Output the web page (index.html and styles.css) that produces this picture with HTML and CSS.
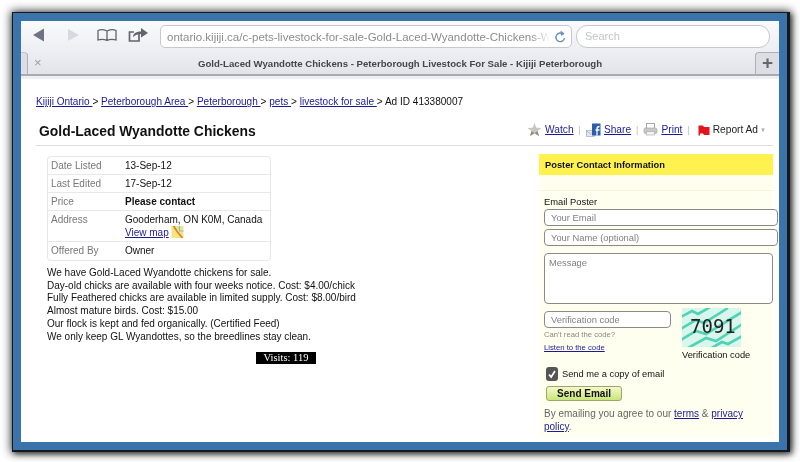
FILE: index.html
```html
<!DOCTYPE html>
<html lang="en">
<head>
    <meta charset="UTF-8">
    <title>Gold-Laced Wyandotte Chickens - Kijiji Peterborough</title>
    <link rel="stylesheet" href="styles.css">
</head>
<body>
    <div class="frame">
        <div class="screen">
            <!-- Browser toolbar -->
            <div class="toolbar">
                <svg class="tool-icons" width="120" height="24" viewBox="0 0 120 24">
                    <path d="M1 12 L12 5.500 V18.500 Z" fill="#6f7480"/>
                    <path d="M36 6 L47 12 L36 18 Z" fill="#d6d9e0"/>
                    <path d="M66 7.500 C69 6 72 6.500 75 8 C78 6.500 81 6 84 7.500 V17 C81 16 78 16 75 17.500 C72 16 69 16 66 17 Z M75 8 V17.500" fill="none" stroke="#5f646e" stroke-width="1.300"/>
                    <path d="M107 11 V18 H97.500 V9 H102" fill="none" stroke="#5f646e" stroke-width="1.700"/>
                    <path d="M101 14 C101 10 105 8.500 109 8.500 V5 L116 10 L109 14.500 V11 C106 11 103 12 101 14 Z" fill="#5f646e"/>
                </svg>
                <div class="url-box">
                    <span class="url-text">ontario.kijiji.ca/c-pets-livestock-for-sale-Gold-Laced-Wyandotte-Chickens-W</span>
                    <svg width="12" height="14" viewBox="0 0 12 14"><path d="M9.500 4.500 A4.300 4.300 0 1 0 10.500 8" fill="none" stroke="#6d8fc0" stroke-width="1.400"/><path d="M6.500 0.500 L10.500 3.500 L7 6 Z" fill="#6d8fc0"/></svg>
                </div>
                <div class="search-box">Search</div>
            </div>

            <!-- Tab strip -->
            <div class="tabbar">
                <span class="tab-close">&times;</span>
                <span class="tab-title">Gold-Laced Wyandotte Chickens - Peterborough Livestock For Sale - Kijiji Peterborough</span>
                <span class="tab-new">+</span>
            </div>

            <!-- Page -->
            <div class="page">
                <div class="crumbs">
                    <a href="#">Kijiji Ontario </a> &gt; <a href="#">Peterborough Area </a> &gt; <a href="#">Peterborough </a> &gt; <a href="#">pets </a> &gt; <a href="#">livestock for sale </a> &gt; Ad ID 413380007
                </div>
                <div class="title-row">
                    <h1>Gold-Laced Wyandotte Chickens</h1>
                    <div class="actions">
                        <svg width="15" height="15" viewBox="0 0 16 15"><path d="M8 0.500 L10 5.500 L15.500 5.800 L11.200 9.200 L12.800 14.500 L8 11.500 L3.200 14.500 L4.800 9.200 L0.500 5.800 L6 5.500 Z" fill="#c8c8c0"/><path d="M3.200 14.500 L4.800 9.200 L8 11.500 Z M12.800 14.500 L8 11.500 L11.200 9.200 Z" fill="#8e8e80"/></svg>
                        <a href="#">Watch</a><i>|</i>
                        <svg width="15" height="14" viewBox="0 0 15 14"><rect x="0.300" y="7.500" width="8" height="6" fill="#e4e7ee" stroke="#98a0ae" stroke-width="0.600"/><path d="M0.500 8 L4.300 11 L8 8" fill="none" stroke="#98a0ae" stroke-width="0.600"/><rect x="6" y="0.500" width="8.500" height="12" fill="#2f5ea8"/><path d="M11 12.500 V6 Q11 3.500 13.500 3.500 M9.500 7 H13.500" fill="none" stroke="#fff" stroke-width="1.300"/></svg>
                        <a href="#">Share</a><i>|</i>
                        <svg width="15" height="13" viewBox="0 0 14 13"><rect x="3" y="0.500" width="8" height="5" fill="#fff" stroke="#a8a8a8"/><rect x="0.500" y="5" width="13" height="5.500" rx="1.500" fill="#c8c8c8" stroke="#a0a0a0" stroke-width="0.600"/><rect x="3" y="8.500" width="8" height="3.500" fill="#f2f2f2" stroke="#a8a8a8" stroke-width="0.600"/></svg>
                        <a href="#">Print</a><i class="wider">|</i>
                        <svg width="12" height="12" viewBox="0 0 12 12"><path d="M0.500 1.500 H5 L6 3 H11.500 V11 H6 L5 9.500 H2 V11.500 H0.500 Z" fill="#e2141c"/></svg>
                        <span class="report">Report Ad</span><span class="caret">&#9660;</span>
                    </div>
                </div>

                <div class="columns">
                    <div class="left">
                        <table class="details">
                            <tr><th>Date Listed</th><td>13-Sep-12</td></tr>
                            <tr><th>Last Edited</th><td>17-Sep-12</td></tr>
                            <tr><th>Price</th><td><b>Please contact</b></td></tr>
                            <tr><th>Address</th><td>Gooderham, ON K0M, Canada<br><a href="#">View map</a><svg class="map-icon" width="13" height="12" viewBox="0 0 12 12"><rect width="12" height="12" fill="#f3e487"/><path d="M2 0 L6 6 L11 12" fill="none" stroke="#d88a20" stroke-width="1.800"/><path d="M8 0 V5 H12" fill="none" stroke="#8fb8d8" stroke-width="1.200"/></svg></td></tr>
                            <tr class="last"><th>Offered By</th><td>Owner</td></tr>
                        </table>
                        <p class="desc">We have Gold-Laced Wyandotte chickens for sale.<br>
                        Day-old chicks are available with four weeks notice. Cost: $4.00/chick<br>
                        Fully Feathered chicks are available in limited supply. Cost: $8.00/bird<br>
                        Almost mature birds. Cost: $15.00<br>
                        Our flock is kept and fed organically. (Certified Feed)<br>
                        We only keep GL Wyandottes, so the breedlines stay clean.</p>
                        <div class="visits">Visits: 119</div>
                    </div>

                    <div class="contact">
                        <div class="contact-head">Poster Contact Information</div>
                        <div class="contact-gap"></div>
                        <div class="contact-body">
                            <div class="email-label">Email Poster</div>
                            <div class="field wide">Your Email</div>
                            <div class="field wide">Your Name (optional)</div>
                            <div class="field message">Message</div>
                            <div class="verify">
                                <div class="verify-left">
                                    <div class="field code">Verification code</div>
                                    <div class="cant">Can't read the code?</div>
                                    <a class="listen" href="#">Listen to the code</a>
                                </div>
                                <div class="verify-right">
                                    <div class="captcha">
                                        <svg width="59" height="39" viewBox="0 0 59 39">
                                            <rect width="59" height="39" fill="#d8f6eb"/>
                                            <path d="M-3 10 L10 3 L16 6 L30 -2 M-3 22 L14 12 L22 15 L46 0 M-3 33 L14 23 L24 26 L60 4 M4 41 L24 30 L34 33 L62 15 M26 42 L40 34 L46 36 L62 27" fill="none" stroke="#4fd3b4" stroke-width="2.600"/>
                                        </svg>
                                        <span>7091</span>
                                    </div>
                                    <div class="captcha-label">Verification code</div>
                                </div>
                            </div>
                            <label class="copy">
                                <span class="check"><svg width="14" height="14" viewBox="0 0 14 14"><path d="M3.500 7.500 L6 10.500 L10.500 3.500" fill="none" stroke="#fff" stroke-width="2"/></svg></span>
                                Send me a copy of email
                            </label>
                            <button class="send">Send Email</button>
                            <p class="agree">By emailing you agree to our <a href="#">terms</a> &amp; <a href="#">privacy policy</a>.</p>
                        </div>
                    </div>
                </div>
            </div>
        </div>
    </div>
</body>
</html>
```

FILE: styles.css
```css
/* Photo frame round the tablet screenshot */
html, body {
    margin: 0;
    padding: 0;
    height: 462px;
    overflow: hidden;
    background: #fff;
}

body {
    font-family: "Liberation Sans", Arial, sans-serif;
    font-size: 10px;
    color: #111;
}

.frame {
    box-sizing: border-box;
    width: 778px;
    height: 440px;
    margin: 12px 0 0 12px;
    padding: 8px;
    background: #3b73ab;
    border: 1px solid #15181c;
    border-right-width: 3px;
    border-bottom-width: 2px;
    box-shadow: 0 0 9px 1px rgba(0, 0, 0, 0.75), 2px 2px 5px rgba(0, 0, 0, 0.5);
}

.screen {
    height: 100%;
    background: #fff;
    display: flex;
    flex-direction: column;
    border-radius: 2px 2px 0 0;
    filter: blur(0.25px);
}

/* Toolbar */
.toolbar {
    height: 31px;
    box-sizing: border-box;
    display: flex;
    align-items: center;
    padding: 0 9px 0 11px;
    background: linear-gradient(#fafafc, #eceef3);
}

.tool-icons {
    flex: none;
    margin: -3px 8px 0 0;
}

.url-box {
    box-sizing: border-box;
    width: 412px;
    height: 23px;
    display: flex;
    align-items: center;
    gap: 4px;
    padding: 0 5px 0 6px;
    background: #fff;
    border: 1px solid #c6c8cd;
    border-radius: 5px;
}

.url-text {
    flex: 1;
    overflow: hidden;
    white-space: nowrap;
    font-size: 11.500px;
    color: #8c8c8c;
    -webkit-mask-image: linear-gradient(to right, #000 95%, transparent);
}

.search-box {
    box-sizing: border-box;
    width: 194px;
    height: 23px;
    margin-left: 4px;
    padding: 4px 8px;
    font-size: 11px;
    color: #c4c4c4;
    background: #fff;
    border: 1px solid #c6c8cd;
    border-radius: 11px;
}

/* Tabs */
.tabbar {
    position: relative;
    height: 22px;
    margin-bottom: 4px;
    text-align: center;
    line-height: 23px;
    font-size: 9.650px;
    font-weight: bold;
    color: #44464c;
    background: linear-gradient(#eceef3, #e2e4ea);
    border-bottom: 2px solid #a9abb2;
    box-shadow: 0 3px 0 #eeeff2;
}

.tabbar::before {
    content: "";
    position: absolute;
    left: 0;
    top: 0;
    bottom: 0;
    width: 6px;
    background: #dcdee4;
    border-right: 1px solid #aeb0b6;
    border-top: 1px solid #c4c6cc;
    border-radius: 0 4px 0 0;
}

.tab-close {
    position: absolute;
    left: 13px;
    top: 0;
    font-size: 13px;
    line-height: 21px;
    font-weight: normal;
    color: #9a9ca2;
}

.tab-new {
    position: absolute;
    right: 0;
    top: 0;
    width: 24px;
    height: 22px;
    line-height: 20px;
    font-size: 19px;
    color: #62656c;
    background: #dcdee4;
    border: 1px solid #aeb0b6;
    border-right: 0;
    border-bottom: 0;
    border-radius: 4px 0 0 0;
    box-sizing: border-box;
}

/* Page */
.page {
    flex: 1;
    min-height: 0;
    padding: 15px 10px 0 15px;
}

a {
    color: #1a1a96;
}

.crumbs {
    line-height: 13px;
    margin-bottom: 8px;
    font-size: 10.050px;
}

.title-row {
    display: flex;
    justify-content: space-between;
    align-items: center;
    height: 29px;
    padding: 0 7px 0 3px;
    border-bottom: 1px solid #ddd;
    margin-right: -4px;
}

h1 {
    margin: 0;
    font-size: 13.900px;
    line-height: 18px;
}

.actions {
    display: flex;
    align-items: center;
    gap: 3px;
    margin-top: -2px;
    font-size: 10.200px;
}

.actions i {
    font-style: normal;
    color: #bbb;
    margin: 0 2px;
    font-size: 9px;
}

.actions .wider {
    margin-right: 5px;
}

.report {
    color: #222;
}

.caret {
    color: #aaa;
    font-size: 6px;
    margin-left: -1px;
}

.columns {
    display: flex;
    justify-content: space-between;
    align-items: flex-start;
    padding: 8px 0 0 11px;
}

/* Left column */
.left {
    width: 330px;
    padding-top: 2px;
}

.details {
    width: 224px;
    border-collapse: separate;
    border-spacing: 0;
    border: 1px solid #e6e6e6;
    border-radius: 4px;
    line-height: 13px;
}

.details th, .details td {
    padding: 2px 0;
    vertical-align: top;
    border-bottom: 1px solid #e8e8e8;
}

.details th {
    width: 74px;
    padding-left: 3px;
    font-weight: normal;
    text-align: left;
    color: #777;
}

.details .last th, .details .last td {
    padding-bottom: 3px;
    border-bottom: 0;
}

.map-icon {
    vertical-align: -2px;
    margin-left: 2px;
}

.desc {
    margin: 6px 0 0;
    line-height: 12.700px;
    white-space: nowrap;
}

.visits {
    width: 60px;
    height: 12px;
    margin: 9px 0 0 209px;
    line-height: 12px;
    font-family: "Liberation Serif", serif;
    font-size: 10.500px;
    text-align: center;
    color: #fff;
    background: #000;
}

/* Contact panel */
.contact {
    width: 234px;
    height: 283px;
    margin-right: -4px;
    background: #fffff0;
}

.contact-head {
    height: 21px;
    padding-left: 6px;
    line-height: 22px;
    font-size: 9.300px;
    font-weight: bold;
    background: #fff24f;
}

.contact-gap {
    height: 15px;
    border-bottom: 1px solid #f5f5da;
}

.contact-body {
    padding: 4px 0 0 5px;
}

.email-label {
    line-height: 13px;
    margin-bottom: 1px;
    font-size: 9.400px;
}

.field {
    box-sizing: border-box;
    padding-left: 6px;
    font-size: 9.400px;
    color: #808080;
    background: #fff;
    border: 1px solid #8b8b86;
    border-radius: 4px;
}

.wide {
    width: 234px;
    height: 17px;
    line-height: 15px;
    margin-bottom: 3px;
}

.message {
    width: 229px;
    height: 51px;
    margin-top: 7px;
    padding: 3px 4px;
    line-height: 12px;
}

.verify {
    display: flex;
    margin-top: 7px;
}

.verify-left {
    width: 138px;
}

.code {
    width: 127px;
    height: 17px;
    line-height: 15px;
}

.cant, .listen {
    display: block;
    font-size: 7.700px;
}

.cant {
    margin-top: 2px;
    line-height: 10px;
    color: #888;
}

.listen {
    margin-top: 3px;
    line-height: 10px;
}

.verify-right {
    margin-top: -3px;
}

.captcha {
    position: relative;
    width: 59px;
    height: 39px;
}

.captcha svg {
    display: block;
}

.captcha span {
    position: absolute;
    left: 8px;
    top: 7px;
    font-family: "DejaVu Sans Mono", monospace;
    font-size: 19px;
    line-height: 22px;
    color: #222;
}

.captcha-label {
    margin-top: 2px;
    line-height: 12px;
    font-size: 9.300px;
}

.copy {
    display: flex;
    align-items: center;
    gap: 4px;
    margin: 6px 0 0 2px;
    line-height: 14px;
    font-size: 9.300px;
}

.check {
    width: 12px;
    height: 14px;
    display: flex;
    align-items: center;
    justify-content: center;
    background: #555;
    border-radius: 3px;
}

.send {
    display: block;
    width: 76px;
    height: 15px;
    margin: 5px 0 0 2px;
    padding: 0;
    font-family: inherit;
    font-size: 10px;
    font-weight: bold;
    color: #111;
    background: linear-gradient(#f5f9c8, #c9e67a);
    border: 1px solid #9aa86a;
    border-radius: 3px;
}

.agree {
    width: 225px;
    margin: 6px 0 0;
    line-height: 13px;
    color: #666;
}
```
